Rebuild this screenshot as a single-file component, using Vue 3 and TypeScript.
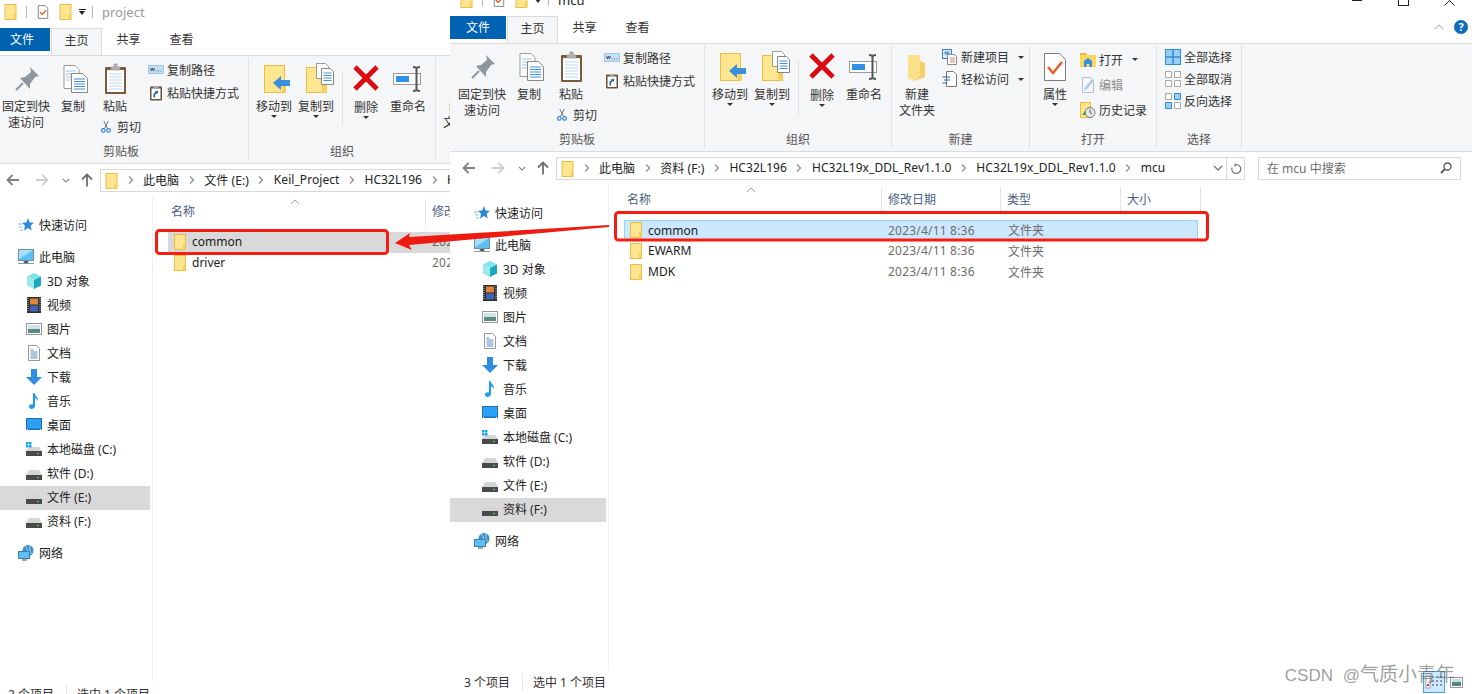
<script setup lang="ts">
interface NavItem {
  label: string
  icon: string
  child?: boolean
  gap?: boolean
}

interface FileRow {
  name: string
  date?: string
  type?: string
}

interface ExplorerWindow {
  title: string
  active: boolean
  selectedNav: string
  crumbs: string[]
  rows: FileRow[]
  total: string
}

const navItems: NavItem[] = [
  { label: "快速访问", icon: "star" },
  { label: "此电脑", icon: "pc", gap: true },
  { label: "3D 对象", icon: "cube", child: true },
  { label: "视频", icon: "film", child: true },
  { label: "图片", icon: "picture", child: true },
  { label: "文档", icon: "doc", child: true },
  { label: "下载", icon: "download", child: true },
  { label: "音乐", icon: "music", child: true },
  { label: "桌面", icon: "desktop", child: true },
  { label: "本地磁盘 (C:)", icon: "windrive", child: true },
  { label: "软件 (D:)", icon: "drive", child: true },
  { label: "文件 (E:)", icon: "drive", child: true },
  { label: "资料 (F:)", icon: "drive", child: true },
  { label: "网络", icon: "network", gap: true },
]

const windows: ExplorerWindow[] = [
  {
    title: "project",
    active: false,
    selectedNav: "文件 (E:)",
    crumbs: ["此电脑", "文件 (E:)", "Keil_Project", "HC32L196", "HC32L19x"],
    rows: [
      { name: "common", date: "2023/4/11 8:36", type: "文件夹" },
      { name: "driver", date: "2023/4/11 8:36", type: "文件夹" },
    ],
    total: "2 个项目",
  },
  {
    title: "mcu",
    active: true,
    selectedNav: "资料 (F:)",
    crumbs: ["此电脑", "资料 (F:)", "HC32L196", "HC32L19x_DDL_Rev1.1.0", "HC32L19x_DDL_Rev1.1.0", "mcu"],
    rows: [
      { name: "common", date: "2023/4/11 8:36", type: "文件夹" },
      { name: "EWARM", date: "2023/4/11 8:36", type: "文件夹" },
      { name: "MDK", date: "2023/4/11 8:36", type: "文件夹" },
    ],
    total: "3 个项目",
  },
]
</script>

<template>
  <div class="screen">
    <svg class="sprite" width="0" height="0" aria-hidden="true">
      <defs>
        <symbol id="folder" viewBox="0 0 12 16">
          <rect x="0.5" y="0.5" width="11" height="15" fill="#fde68f" stroke="#ebbd45" />
          <rect x="9" y="10" width="2.5" height="5.5" fill="#f8cf5c" />
        </symbol>
        <symbol id="check-doc" viewBox="0 0 14 16">
          <path d="M1.5.5h8l3 3v12h-11z" fill="#fff" stroke="#777" />
          <path d="M3.5 8l2.5 3 4.5-5" fill="none" stroke="#e8602c" stroke-width="1.6" />
        </symbol>
        <symbol id="pin" viewBox="0 0 32 32">
          <path d="M20 4l9 9-4 1-5 7 0 5-10-11 5-1 6-5z" fill="#8d959d" />
          <path d="M13 20l-7 7" stroke="#8d959d" stroke-width="2" />
        </symbol>
        <symbol id="copy" viewBox="0 0 32 32">
          <path d="M7 2.500h11l4 4v19H7z" fill="#fff" stroke="#9a9a9a" />
          <path d="M9 8h10M9 11h10M9 14h10M9 17h10" stroke="#9cc4ea" />
          <path d="M14.500 10.500h11l5 5v14h-16z" fill="#fff" stroke="#868686" />
          <path d="M17 16h11M17 18.500h11M17 21h11M17 23.500h11M17 26h11" stroke="#3f8fdc" />
        </symbol>
        <symbol id="paste" viewBox="0 0 32 32">
          <rect x="6" y="4" width="21" height="27" rx="1" fill="#7b5a3c" />
          <rect x="8" y="7" width="17" height="22" fill="#fff" />
          <path d="M10 11h13M10 14h13M10 17h13M10 20h13M10 23h13M10 26h13" stroke="#bcd6f0" />
          <path d="M12 7V4h3V1h3v3h3v3z" fill="#b4b4b4" stroke="#8c8c8c" stroke-width=".6" />
        </symbol>
        <symbol id="cut" viewBox="0 0 16 16">
          <path d="M11 0L6 10M5 0l5 10" stroke="#777" stroke-width="1.300" />
          <circle cx="4.500" cy="12.500" r="2.400" fill="none" stroke="#2a7fd0" stroke-width="1.500" />
          <circle cx="11.500" cy="12.500" r="2.400" fill="none" stroke="#2a7fd0" stroke-width="1.500" />
        </symbol>
        <symbol id="copy-path" viewBox="0 0 16 16">
          <rect x="0.500" y="3.500" width="15" height="8" fill="#c3e0f7" stroke="#9fc6e4" />
          <path d="M2.500 6l1 3 1-3 1 3 1-3M8.500 9h.8M10.500 9h.8M12.500 9h.8" fill="none" stroke="#334" stroke-width=".8" />
        </symbol>
        <symbol id="shortcut" viewBox="0 0 16 16">
          <rect x="2" y="1.500" width="12" height="14" rx="1" fill="#6b5037" />
          <rect x="3.500" y="3.500" width="9" height="10.500" fill="#fff" />
          <path d="M5.500 1.500h5v2.500h-5z" fill="#aaa" />
          <path d="M5.500 12.500V9l2-2H6l4-1.500V9L8.800 8 7 10v2.500z" fill="#1f5f9c" />
        </symbol>
        <symbol id="move" viewBox="0 0 32 32">
          <rect x="3.500" y="2.500" width="20" height="27" fill="#fde68f" stroke="#ebbd45" />
          <rect x="21" y="18" width="4" height="11.500" fill="#f8cf5c" />
          <path d="M12 20l8-7v4h9v6h-9v4z" fill="#3a8fdc" />
        </symbol>
        <symbol id="copy-to" viewBox="0 0 32 32">
          <rect x="3.500" y="4.500" width="20" height="25" fill="#fde68f" stroke="#ebbd45" />
          <rect x="19" y="18" width="5" height="11.500" fill="#f8cf5c" />
          <path d="M13.500.5h9l3 3v12h-12z" fill="#fff" stroke="#999" />
          <path d="M18.500 5.500h9l3 3v13h-12z" fill="#fff" stroke="#868686" />
          <path d="M20.500 10h8M20.500 12.500h8M20.500 15h8M20.500 17.500h8" stroke="#3f8fdc" />
        </symbol>
        <symbol id="del" viewBox="0 0 32 32">
          <path d="M5 4l22 22M27 4L5 26" stroke="#dc0b12" stroke-width="4.800" />
        </symbol>
        <symbol id="rename" viewBox="0 0 32 32">
          <rect x="1.500" y="10.500" width="27" height="11" fill="#fff" stroke="#9a9a9a" />
          <rect x="4" y="13" width="13" height="6" fill="#2f92e4" />
          <path d="M21 4c2 0 3 0 3.500 1.500C25 4 26 4 28 4M24.500 5v21M21 28c2 0 3 0 3.500-1.500.5 1.500 1.500 1.500 3.500 1.500" fill="none" stroke="#555" stroke-width="2" />
        </symbol>
        <symbol id="new-folder" viewBox="0 0 32 32">
          <path d="M7 4h12v20l-6 6-6-3z" fill="#fbe08a" />
          <path d="M19 10l5 2v14l-11 4 6-6z" fill="#f6cf6a" />
        </symbol>
        <symbol id="new-item" viewBox="0 0 16 16">
          <rect x="0.500" y="0.500" width="9" height="9" fill="#dbeafa" stroke="#3f7fb8" />
          <rect x="2.500" y="2.500" width="5" height="3" fill="#5a9bd8" />
          <path d="M5.500 5.500h7l2 2v8h-9z" fill="#fff" stroke="#888" />
          <path d="M8 9h5M8 11h5M8 13h5" stroke="#c08b8b" />
        </symbol>
        <symbol id="easy" viewBox="0 0 16 16">
          <path d="M4.500.5h7l3 3v12h-10z" fill="#fff" stroke="#777" />
          <path d="M.5 6H8M2 9h6M.5 12H5" stroke="#2d6ea8" stroke-width="1.200" />
        </symbol>
        <symbol id="props" viewBox="0 0 32 32">
          <path d="M5.500 2.500h15l6 6v21h-21z" fill="#fff" stroke="#7c7c7c" />
          <path d="M9 16l5 6 9-11" fill="none" stroke="#e8602c" stroke-width="2.600" />
        </symbol>
        <symbol id="open" viewBox="0 0 16 16">
          <path d="M0 1h6l1 2h9v12H0z" fill="#fad75f" />
          <path d="M0 1h6l1 2H0z" fill="#eab93b" />
          <path d="M4 15v-6l4-3 4 3v6H9.500v-3h-3v3z" fill="#2f8fdc" />
        </symbol>
        <symbol id="edit" viewBox="0 0 16 16">
          <path d="M2.500.5h8l3 3v12h-11z" fill="#f5f8fc" stroke="#b9bec5" />
          <path d="M4 14l1-4 7-8 2 2-7 8z" fill="#b5cce6" />
        </symbol>
        <symbol id="history" viewBox="0 0 16 16">
          <rect x="0.500" y="0.500" width="10" height="15" fill="#fde68f" stroke="#ebbd45" />
          <circle cx="10" cy="10.500" r="5" fill="#e6e6e6" stroke="#777" />
          <path d="M10 7.500v3l2 1.500" fill="none" stroke="#555" />
          <path d="M2 13l3-4 1 4z" fill="#3a9a3a" />
        </symbol>
        <symbol id="sel-all" viewBox="0 0 16 16">
          <rect x="0.500" y="0.500" width="15" height="15" fill="#9ccff3" stroke="#2c8fdc" />
          <path d="M8 0v16M0 8h16" stroke="#2c8fdc" stroke-width="1.500" />
        </symbol>
        <symbol id="sel-none" viewBox="0 0 16 16">
          <path d="M.5.5h6v6h-6zM9.500.5h6v6h-6zM.5 9.500h6v6h-6zM9.500 9.500h6v6h-6z" fill="#fff" stroke="#a8a8a8" />
        </symbol>
        <symbol id="sel-inv" viewBox="0 0 16 16">
          <path d="M.5.500h6v6h-6zM9.500 9.500h6v6h-6z" fill="#fff" stroke="#a8a8a8" />
          <path d="M9.500.5h6v6h-6zM.5 9.500h6v6h-6z" fill="#9ccff3" stroke="#2c8fdc" />
        </symbol>
        <symbol id="star" viewBox="0 0 16 16">
          <path d="M10 1l1.600 4.500 4.400.3-3.400 3 1.100 4.700L10 11l-4 2.500 1-4.700-3-3 4.300-.3z" fill="#2b88d8" />
          <path d="M0 7h4M1 10h3M2 13h3" stroke="#7ab8ea" />
        </symbol>
        <symbol id="pc" viewBox="0 0 16 16">
          <rect x="0.500" y="0.500" width="15" height="11" fill="#5cc0f4" stroke="#7a8a96" />
          <path d="M1 1h14L1 10z" fill="#a6e1fb" />
          <path d="M6 12h4v2H6zM0 14.500h16" stroke="#8a98a4" />
        </symbol>
        <symbol id="cube" viewBox="0 0 16 16">
          <path d="M8 0l7 3.500L8 7 1 3.500z" fill="#7fe3ea" />
          <path d="M1 3.500L8 7v9l-7-3.500z" fill="#9ce8ee" />
          <path d="M15 3.500L8 7v9l7-3.500z" fill="#1aa9bd" />
        </symbol>
        <symbol id="film" viewBox="0 0 16 16">
          <rect x="1" y="0" width="14" height="16" fill="#2e2e2e" />
          <rect x="4" y="1.500" width="8" height="6" fill="#e0863a" />
          <rect x="4" y="8.500" width="8" height="6" fill="#3f62b8" />
          <path d="M2 1v14M14 1v14" stroke="#ccc" stroke-dasharray="1 1" />
        </symbol>
        <symbol id="picture" viewBox="0 0 16 16">
          <rect x="0.500" y="2.500" width="15" height="11" fill="#fff" stroke="#999" />
          <rect x="2" y="4" width="12" height="4" fill="#cfe3ec" />
          <rect x="2" y="8" width="12" height="4" fill="#5b8d7c" />
        </symbol>
        <symbol id="doc" viewBox="0 0 16 16">
          <path d="M2.500.5h8l3 3v12h-11z" fill="#fff" stroke="#9a9a9a" />
          <path d="M4.500 5h3M4.500 7h7M4.500 9h7M4.500 11h7M4.500 13h7" stroke="#5f8fb8" />
        </symbol>
        <symbol id="download" viewBox="0 0 16 16">
          <path d="M5 0h6v8h5l-8 8-8-8h5z" fill="#2f8ee0" />
        </symbol>
        <symbol id="music" viewBox="0 0 16 16">
          <path d="M7 0h1.500c.5 3 4 4 3.500 8-1-2-2.300-2.500-3-2.500V13c0 2-2 3-3.500 3S3 15 3 13.500 5 11 7 11.500z" fill="#1e9cf0" />
        </symbol>
        <symbol id="desktop" viewBox="0 0 16 16">
          <rect x="0" y="1" width="16" height="12" fill="#1d6fb8" />
          <rect x="1" y="2" width="14" height="9.500" fill="#2aa0f2" />
          <path d="M1 12.500h1M14 12.500h1" stroke="#fff" />
        </symbol>
        <symbol id="drive" viewBox="0 0 16 16">
          <path d="M3 5h10l3 5H0z" fill="#d5d5d5" />
          <rect x="0" y="10" width="16" height="5" fill="#4a4a4a" />
          <rect x="11" y="12" width="2" height="1" fill="#4ade4a" />
        </symbol>
        <symbol id="windrive" viewBox="0 0 16 16">
          <path d="M3 6h10l3 4H0z" fill="#d5d5d5" />
          <rect x="0" y="10" width="16" height="5" fill="#4a4a4a" />
          <rect x="11" y="12" width="2" height="1" fill="#4ade4a" />
          <path d="M0 1h2.500v2.500H0zM3 1h2.500v2.500H3zM0 4h2.500v2.500H0zM3 4h2.500v2.500H3z" fill="#13a5e8" />
        </symbol>
        <symbol id="network" viewBox="0 0 16 16">
          <circle cx="10" cy="5.500" r="5.500" fill="#3f8fc8" />
          <path d="M7 1c2 2 4 6 2 9M12 1c-1 3 0 6 2 8" stroke="#a8d4ee" fill="none" />
          <rect x="0.500" y="6.500" width="11" height="7" fill="#5cc0f4" stroke="#3f7fa8" />
          <path d="M4 15h5" stroke="#7a8a96" stroke-width="1.500" />
        </symbol>
        <symbol id="search" viewBox="0 0 12 12">
          <circle cx="7.500" cy="4.500" r="3.500" fill="none" stroke="#555" stroke-width="1.300" />
          <path d="M5 7l-4 4" stroke="#555" stroke-width="1.800" />
        </symbol>
        <symbol id="refresh" viewBox="0 0 12 12">
          <path d="M6 1.500A4.500 4.500 0 1 1 2 4.500" fill="none" stroke="#777" stroke-width="1.200" />
          <path d="M4.500 0v4L7 2z" fill="#777" />
        </symbol>
        <symbol id="chev" viewBox="0 0 6 8">
          <path d="M1 0.500L4.500 4 1 7.500" fill="none" stroke="#8c8c8c" stroke-width="1.200" />
        </symbol>
        <symbol id="down" viewBox="0 0 10 6">
          <path d="M1 1l4 4 4-4" fill="none" stroke="#7a7a7a" stroke-width="1.300" />
        </symbol>
        <symbol id="up" viewBox="0 0 12 7">
          <path d="M1 6l5-5 5 5" fill="none" stroke="#8a8a8a" />
        </symbol>
      </defs>
    </svg>

    <div v-for="win in windows" :key="win.title" class="window" :class="{ active: win.active }">
      <div class="titlebar">
        <svg class="qa-folder"><use href="#folder" /></svg>
        <span class="qa-sep sep-a"></span>
        <svg class="qa-check"><use href="#check-doc" /></svg>
        <svg class="qa-folder qa-second"><use href="#folder" /></svg>
        <span class="qa-drop"></span>
        <span class="qa-sep sep-b"></span>
        <span class="win-title">{{ win.title }}</span>
        <div v-if="win.active" class="win-controls">
          <span class="ctl"><i class="ctl-min"></i></span>
          <span class="ctl"><i class="ctl-max"></i></span>
          <span class="ctl">
            <svg width="11" height="11"><path d="M.5.500l10 10M10.500.500l-10 10" stroke="#222" /></svg>
          </span>
        </div>
      </div>

      <div class="tabs">
        <span class="tab tab-file">文件</span>
        <span class="tab tab-home">主页</span>
        <span class="tab">共享</span>
        <span class="tab">查看</span>
        <template v-if="win.active">
          <svg class="tab-collapse"><use href="#up" /></svg>
          <span class="tab-help">?</span>
        </template>
      </div>

      <div class="ribbon">
        <div class="group g-clip">
          <div class="group-body">
            <div class="big b-pin">
              <svg class="big-icon"><use href="#pin" /></svg>
              <span>固定到快<br />速访问</span>
            </div>
            <div class="big b-copy">
              <svg class="big-icon"><use href="#copy" /></svg>
              <span>复制</span>
            </div>
            <div class="paste-col">
              <div class="big b-paste">
                <svg class="big-icon"><use href="#paste" /></svg>
                <span>粘贴</span>
              </div>
              <div class="small cut"><svg class="cut-icon"><use href="#cut" /></svg>剪切</div>
            </div>
            <div class="small-col col-clip">
              <div class="small"><svg class="small-icon"><use href="#copy-path" /></svg>复制路径</div>
              <div class="small"><svg class="small-icon"><use href="#shortcut" /></svg>粘贴快捷方式</div>
            </div>
          </div>
          <div class="group-label">剪贴板</div>
        </div>

        <div class="group g-org">
          <div class="group-body">
            <div class="big b-org">
              <svg class="big-icon nudge"><use href="#move" /></svg>
              <span>移动到</span>
              <i class="caret"></i>
            </div>
            <div class="big b-org">
              <svg class="big-icon nudge"><use href="#copy-to" /></svg>
              <span>复制到</span>
              <i class="caret"></i>
            </div>
            <span class="org-sep"></span>
            <div class="big b-org">
              <svg class="big-icon"><use href="#del" /></svg>
              <span class="low">删除</span>
              <i class="caret"></i>
            </div>
            <div class="big b-org">
              <svg class="big-icon"><use href="#rename" /></svg>
              <span>重命名</span>
            </div>
          </div>
          <div class="group-label">组织</div>
        </div>

        <div class="group g-new">
          <div class="group-body">
            <div class="big b-org">
              <svg class="big-icon"><use href="#new-folder" /></svg>
              <span>新建<br />文件夹</span>
            </div>
            <div class="small-col col-new">
              <div class="small"><svg class="small-icon"><use href="#new-item" /></svg>新建项目<i class="caret side"></i></div>
              <div class="small"><svg class="small-icon"><use href="#easy" /></svg>轻松访问<i class="caret side"></i></div>
            </div>
          </div>
          <div class="group-label">新建</div>
        </div>

        <div class="group g-open">
          <div class="group-body">
            <div class="big b-org">
              <svg class="big-icon"><use href="#props" /></svg>
              <span>属性</span>
              <i class="caret"></i>
            </div>
            <div class="small-col col-open">
              <div class="small"><svg class="small-icon"><use href="#open" /></svg>打开<i class="caret side"></i></div>
              <div class="small disabled"><svg class="small-icon"><use href="#edit" /></svg>编辑</div>
              <div class="small"><svg class="small-icon"><use href="#history" /></svg>历史记录</div>
            </div>
          </div>
          <div class="group-label">打开</div>
        </div>

        <div class="group g-select">
          <div class="group-body">
            <div class="small-col col-select">
              <div class="small"><svg class="small-icon"><use href="#sel-all" /></svg>全部选择</div>
              <div class="small"><svg class="small-icon"><use href="#sel-none" /></svg>全部取消</div>
              <div class="small"><svg class="small-icon"><use href="#sel-inv" /></svg>反向选择</div>
            </div>
          </div>
          <div class="group-label">选择</div>
        </div>
      </div>

      <div class="addressbar">
        <span class="nav-btn nav-back">
          <svg width="14" height="12"><path d="M13 6H2M6.500 1L1.500 6l5 5" fill="none" stroke="#808080" stroke-width="1.800" /></svg>
        </span>
        <span class="nav-btn nav-forward">
          <svg width="14" height="12"><path d="M1 6h11M7.500 1l5 5-5 5" fill="none" stroke="#cfcfcf" stroke-width="1.800" /></svg>
        </span>
        <span class="nav-btn nav-recent"><svg width="8" height="5"><use href="#down" /></svg></span>
        <span class="nav-btn nav-up">
          <svg width="12" height="14"><path d="M6 13.500V2M1 6.500l5-5 5 5" fill="none" stroke="#6e6e6e" stroke-width="1.800" /></svg>
        </span>
        <div class="address">
          <svg class="addr-folder"><use href="#folder" /></svg>
          <template v-for="crumb in win.crumbs" :key="crumb">
            <span class="crumb-sep"><svg width="6" height="8"><use href="#chev" /></svg></span>
            <span class="crumb">{{ crumb }}</span>
          </template>
          <span class="addr-drop"><svg width="10" height="6"><use href="#down" /></svg></span>
          <span class="addr-refresh"><svg width="12" height="12"><use href="#refresh" /></svg></span>
        </div>
        <div class="searchbox">
          <span>在 {{ win.title }} 中搜索</span>
          <svg width="12" height="12"><use href="#search" /></svg>
        </div>
      </div>

      <div class="main">
        <aside class="sidebar">
          <div
            v-for="item in navItems"
            :key="item.label"
            class="nav-item"
            :class="{ child: item.child, gap: item.gap, selected: item.label === win.selectedNav }"
          >
            <svg class="nav-icon"><use :href="'#' + item.icon" /></svg>
            <span>{{ item.label }}</span>
          </div>
        </aside>

        <section class="list">
          <div class="list-head">
            <div class="col col-name">
              名称
              <svg class="sort-mark"><use href="#up" /></svg>
            </div>
            <div class="col col-date">修改日期</div>
            <div class="col col-type">类型</div>
            <div class="col col-size">大小</div>
          </div>
          <div
            v-for="(row, i) in win.rows"
            :key="row.name"
            class="file-row"
            :class="{ picked: i === 0 }"
          >
            <div class="cell-name">
              <svg class="file-icon"><use href="#folder" /></svg>
              <span>{{ row.name }}</span>
            </div>
            <div class="cell-date">{{ row.date }}</div>
            <div class="cell-type">{{ row.type }}</div>
          </div>
        </section>
      </div>

      <div class="statusbar">
        <span class="st-count">{{ win.total }}</span>
        <span class="st-selected">选中 1 个项目</span>
        <div v-if="win.active" class="view-btns">
          <span class="view-details">
            <svg width="18" height="18">
              <rect x="1" y="3" width="4" height="12" fill="#fff" stroke="#888" stroke-width=".7" />
              <rect x="2" y="11" width="2" height="2" fill="#d33" />
              <path d="M7 4h2M11 4h2M15 4h2M7 8h2M11 8h2M15 8h2M7 12h2M11 12h2M15 12h2" stroke="#444" />
            </svg>
          </span>
          <svg class="view-thumb" width="13" height="11">
            <rect x="0.500" y="0.500" width="12" height="10" fill="#fff" stroke="#999" />
            <rect x="2" y="2" width="9" height="3" fill="#c9dfe8" />
            <rect x="2" y="5" width="9" height="4" fill="#55887a" />
          </svg>
        </div>
      </div>
    </div>

    <svg class="annotations" viewBox="0 0 1472 694">
      <rect x="156.500" y="230.500" width="231" height="23" rx="3" fill="none" stroke="#f61d10" stroke-width="3" />
      <rect x="615.500" y="212.500" width="592" height="27.500" rx="3" fill="none" stroke="#f61d10" stroke-width="3" />
      <path d="M609 225L409 237 410 233 395 243 412 250 409 245 609 227z" fill="#ee1b10" />
    </svg>

    <div class="watermark">CSDN @<span class="wm-name">气质小青年</span></div>
  </div>
</template>

<style>
html,
body {
  margin: 0;
  background: #fff;
  overflow: hidden;
}
</style>

<style scoped>
.screen {
  position: relative;
  display: flex;
  width: 1472px;
  height: 694px;
  overflow: hidden;
  background: #fff;
  font-family: "Noto Sans", "Noto Sans CJK SC", sans-serif;
  font-size: 12px;
  color: #222;
}

.sprite {
  position: absolute;
}

svg {
  display: block;
  flex-shrink: 0;
}

/* left window is cut off 6px on its left side, right one sits 12px higher */
.window {
  flex: 0 0 456px;
  width: 456px;
  height: 706px;
  margin-left: -6px;
  display: flex;
  flex-direction: column;
  overflow: hidden;
  background: #fff;
}

.window.active {
  flex: 0 0 1022px;
  width: 1022px;
  margin-left: 0;
  margin-top: -12px;
}

.titlebar {
  flex: 0 0 28px;
  display: flex;
  align-items: center;
  padding: 0 0 4px 10px;
  box-sizing: border-box;
}

.qa-folder {
  width: 13px;
  height: 16px;
}

.qa-second {
  margin-left: 10px;
}

.qa-check {
  width: 12px;
  height: 16px;
}

.qa-sep {
  width: 1px;
  height: 12px;
  background: #b5b5b5;
}

.sep-a {
  margin: 0 10px 0 9px;
}

.sep-b {
  margin: 0 9px 0 6px;
}

.qa-drop {
  width: 7px;
  height: 7px;
  margin-left: 7px;
  border-top: 1px solid #222;
  box-sizing: border-box;
  position: relative;
}

.qa-drop::after {
  content: "";
  position: absolute;
  left: 0;
  top: 1px;
  border: 3.5px solid transparent;
  border-top: 4px solid #222;
  border-bottom: 0;
}

.win-title {
  font-size: 13px;
  color: #9a9a9a;
}

.active .win-title {
  color: #222;
}

.win-controls {
  display: flex;
  margin-left: auto;
  align-items: center;
}

.ctl {
  width: 46px;
  display: flex;
  justify-content: center;
  align-items: center;
}

.ctl-min {
  width: 10px;
  height: 1px;
  background: #222;
}

.ctl-max {
  width: 9px;
  height: 9px;
  border: 1px solid #222;
}

.tabs {
  flex: 0 0 26px;
  position: relative;
  z-index: 1;
  display: flex;
  align-items: flex-start;
}

.tab {
  width: 53px;
  height: 23px;
  line-height: 24px;
  text-align: center;
  color: #333;
  box-sizing: border-box;
}

.tab-file {
  width: 56px;
  line-height: 23px;
  background: #0063b1;
  color: #fff;
  margin-right: 1px;
}

.tab-home {
  width: 51px;
  height: 27px;
  line-height: 23px;
  background: #f5f6f7;
  border: 1px solid #dadbdc;
  border-bottom: 0;
}

.tab-collapse {
  position: absolute;
  right: 28px;
  top: 8px;
  width: 10px;
  height: 6px;
}

.tab-help {
  position: absolute;
  right: 4px;
  top: 4px;
  width: 14px;
  height: 14px;
  border-radius: 50%;
  background: #0f6cbd;
  color: #fff;
  font-size: 11px;
  font-weight: 700;
  line-height: 14px;
  text-align: center;
}

.ribbon {
  flex: 0 0 109px;
  box-sizing: border-box;
  display: flex;
  padding: 2px 0;
  background: #f5f6f7;
  border-top: 1px solid #dadbdc;
  border-bottom: 1px solid #dadbdc;
}

.group {
  flex-shrink: 0;
  box-sizing: border-box;
  display: flex;
  flex-direction: column;
  border-right: 1px solid #e1e3e6;
}

.g-clip { width: 255px; padding-left: 5px; }
.g-org { width: 187px; padding-left: 4px; }
.g-new { width: 138px; padding-left: 4px; }
.g-open { width: 127px; padding-left: 4px; }
.g-select { width: 85px; padding-left: 8px; }

.group-body {
  flex: 0 0 86px;
  display: flex;
  align-items: flex-start;
}

.group-label {
  height: 16px;
  line-height: 16px;
  text-align: center;
  color: #555;
  margin-left: -8px;
}

.g-clip .group-label { margin-left: -5px; }
.g-org .group-label,
.g-new .group-label,
.g-open .group-label { margin-left: -4px; }

.big {
  display: flex;
  flex-direction: column;
  align-items: center;
  padding-top: 5px;
  flex-shrink: 0;
  text-align: center;
  line-height: 16px;
  color: #333;
  white-space: nowrap;
}

.big-icon {
  width: 32px;
  height: 32px;
  margin-bottom: 4px;
}

.big-icon.nudge {
  margin-left: 6px;
}

.b-pin { width: 54px; }
.b-copy { width: 40px; }
.b-paste { width: 44px; }
.b-org { width: 42px; }

.org-sep {
  flex-shrink: 0;
  width: 1px;
  height: 55px;
  margin: 13px 2px 0 5px;
  background: #e1e3e6;
}

.low {
  margin-top: 1px;
}

.caret {
  width: 0;
  height: 0;
  margin-top: 0;
  border: 3px solid transparent;
  border-top: 3px solid #333;
  border-bottom: 0;
}

.caret.side {
  margin: 0 0 0 6px;
}

.paste-col {
  width: 50px;
  flex-shrink: 0;
}

.cut {
  margin: 0 0 0 7px;
  height: 22px;
  gap: 5px;
}

.cut-icon {
  width: 12px;
  height: 16px;
}

.small-col {
  flex-shrink: 0;
}

.col-clip { margin-left: 5px; }
.col-new { margin-left: 4px; }
.col-open { margin-left: 4px; padding-top: 1px; }
.col-open .small { height: 25px; }

.small {
  display: flex;
  align-items: center;
  height: 23px;
  gap: 3px;
  color: #333;
  white-space: nowrap;
}

.col-select .small,
.col-new .small {
  height: 22px;
}

.small.cut {
  gap: 5px;
}

.small.disabled {
  color: #8e8e8e;
}

.small-icon {
  width: 16px;
  height: 16px;
}

.addressbar {
  flex: 0 0 32px;
  display: flex;
  align-items: flex-start;
  padding: 5px 0 0 7px;
  box-sizing: border-box;
}

.nav-btn {
  height: 22px;
  flex-shrink: 0;
  display: flex;
  align-items: center;
  justify-content: center;
}

.nav-back { width: 24px; }
.nav-forward { width: 34px; }
.nav-recent { width: 14px; }
.nav-up { width: 27px; }

.address {
  flex: 0 0 689px;
  height: 23px;
  box-sizing: border-box;
  display: flex;
  align-items: center;
  padding: 0 0 2px 4px;
  border: 1px solid #d9d9d9;
  color: #222;
  white-space: nowrap;
  letter-spacing: 0.06px;
}

.addr-folder {
  width: 13px;
  height: 16px;
  margin-top: 2px;
}

.crumb-sep {
  width: 25px;
  display: flex;
  justify-content: center;
  flex-shrink: 0;
}

.addr-drop {
  margin-left: auto;
  width: 16px;
  display: flex;
  justify-content: center;
}

.addr-refresh {
  width: 17px;
  height: 21px;
  margin-bottom: -2px;
  display: flex;
  align-items: center;
  justify-content: center;
  border-left: 1px solid #d9d9d9;
}

.searchbox {
  flex: 0 0 203px;
  height: 23px;
  box-sizing: border-box;
  margin-left: 13px;
  padding: 0 8px 2px 8px;
  display: flex;
  align-items: center;
  justify-content: space-between;
  border: 1px solid #d9d9d9;
  color: #6d6d6d;
}

.main {
  flex: 1;
  display: flex;
  min-height: 0;
}

.sidebar {
  flex: 0 0 159px;
  box-sizing: border-box;
  padding-top: 18px;
  border-right: 1px solid #f0f0f0;
}

.nav-item {
  display: flex;
  align-items: center;
  gap: 5px;
  width: 156px;
  height: 24px;
  padding-left: 24px;
  padding-bottom: 2px;
  box-sizing: border-box;
  color: #222;
  white-space: nowrap;
}

.nav-item.child {
  padding-left: 32px;
}

.nav-item.gap {
  margin-top: 8px;
}

.nav-item.selected {
  background: #d9d9d9;
}

.nav-icon {
  width: 16px;
  height: 16px;
}

.list {
  flex: 1;
  min-width: 0;
  padding-left: 12px;
  padding-top: 3px;
}

.list-head {
  display: flex;
  height: 27px;
}

.col {
  position: relative;
  box-sizing: border-box;
  padding-left: 6px;
  line-height: 25px;
  flex-shrink: 0;
  border-right: 1px solid #e5e5e5;
  color: #4c607a;
}

.col-name { width: 261px; }
.col-date { width: 119px; }
.col-type { width: 120px; }
.col-size { width: 80px; }

.sort-mark {
  position: absolute;
  left: 50%;
  top: 0;
  width: 10px;
  height: 6px;
  margin-left: -5px;
}

.file-row {
  display: flex;
  align-items: center;
  width: 574px;
  height: 21px;
  margin-left: 3px;
  padding-bottom: 2px;
  box-sizing: border-box;
  white-space: nowrap;
}

.file-row.picked {
  margin-top: 6px;
  background: #d9d9d9;
}

.active .file-row.picked {
  background: #cce8ff;
  border: 1px solid #99d1ff;
  padding-bottom: 1px;
}

.cell-name {
  flex: 0 0 258px;
  box-sizing: border-box;
  display: flex;
  align-items: center;
  gap: 6px;
  padding-left: 6px;
  color: #1a1a1a;
}

.active .picked .cell-name {
  padding-left: 5px;
  flex-basis: 257px;
}

.file-icon {
  width: 12px;
  height: 16px;
}

.cell-date,
.cell-type {
  flex: 0 0 120px;
  box-sizing: border-box;
  padding-left: 6px;
  color: #6d6d6d;
}

.cell-date {
  letter-spacing: 0.2px;
}

.statusbar {
  flex: 0 0 24px;
  display: flex;
  align-items: center;
  padding: 0 9px 0 14px;
  box-sizing: border-box;
  color: #333;
}

.st-count {
  width: 58px;
  flex-shrink: 0;
  border-right: 1px solid #e5e5e5;
}

.st-selected {
  padding-left: 10px;
  white-space: nowrap;
}

.view-btns {
  margin-left: auto;
  display: flex;
  align-items: center;
  gap: 5px;
}

.view-details {
  width: 22px;
  height: 22px;
  box-sizing: border-box;
  display: flex;
  align-items: center;
  justify-content: center;
  background: #cce8ff;
  border: 1px solid #4ba3dc;
}

.annotations {
  position: absolute;
  inset: 0;
  width: 1472px;
  height: 694px;
  pointer-events: none;
}

.watermark {
  position: absolute;
  right: 17px;
  top: 663px;
  font-family: "Liberation Sans", "Noto Sans CJK SC", sans-serif;
  font-size: 17px;
  line-height: 24px;
  word-spacing: 5px;
  color: rgba(90, 90, 90, 0.6);
  white-space: nowrap;
}

.wm-name {
  font-size: 19px;
}
</style>
